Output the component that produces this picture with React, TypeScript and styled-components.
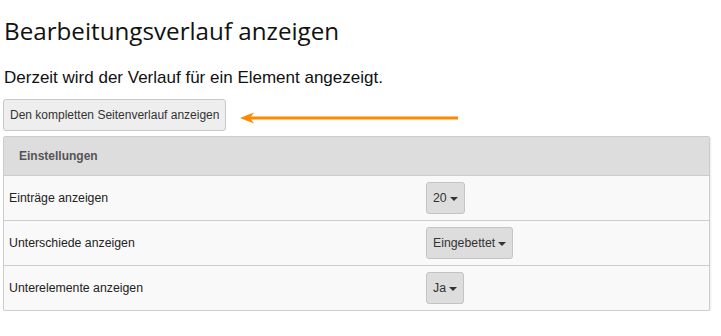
import React from "react";
import styled, { createGlobalStyle } from "styled-components";

const Global = createGlobalStyle`
  html, body { margin: 0; padding: 0; background: #fff; }
  body { font-family: "Liberation Sans", Arial, sans-serif; color: #222; }
`;

const Page = styled.div`
  padding: 0 11px 0 3px;
  display: flex;
  flex-direction: column;
`;

const Title = styled.h1`
  margin: 14px 0 0 1px;
  font-family: "Open Sans", "Noto Sans", sans-serif;
  font-weight: 400;
  font-size: 24.2px;
  line-height: 34px;
  color: #111;
`;

const Lead = styled.p`
  margin: 20px 0 0 1px;
  font-size: 17px;
  line-height: 20px;
  color: #111;
`;

const ActionRow = styled.div`
  display: flex;
  align-items: center;
  margin-top: 11px;
  gap: 14px;
`;

const Button = styled.button`
  font-family: "Liberation Sans", Arial, sans-serif;
  font-size: 12px;
  color: #333;
  background: #eee;
  border: 1px solid #c8c8c8;
  border-radius: 3px;
  height: 32px;
  padding: 0 6px;
  cursor: pointer;
`;

const Arrow = styled.svg`
  display: block;
  margin-top: 5px;
`;

const Panel = styled.div`
  margin-top: 5px;
  border: 1px solid #ccc;
  border-radius: 2px;
  box-shadow: 1px 1px 2px rgba(0, 0, 0, 0.08);
  background: #f9f9f9;
`;

const PanelHeader = styled.div`
  background: #ddd;
  height: 38px;
  display: flex;
  align-items: center;
  padding-left: 15px;
  font-weight: 700;
  font-size: 12px;
  color: #555;
  border-bottom: 1px solid #ccc;
`;

const Row = styled.div<{ $last?: boolean }>`
  display: grid;
  grid-template-columns: 416px 1fr;
  align-items: center;
  height: 44px;
  border-bottom: ${(p) => (p.$last ? "none" : "1px solid #ccc")};
`;

const Label = styled.div`
  padding-left: 5px;
  font-size: 12.3px;
  color: #222;
`;

const Cell = styled.div`
  padding-left: 6px;
  display: flex;
`;

const Dropdown = styled.button`
  font-family: "Liberation Sans", Arial, sans-serif;
  font-size: 12.3px;
  color: #333;
  background: #ddd;
  border: 1px solid #c4c4c4;
  border-radius: 3px;
  height: 32px;
  padding: 0 6px;
  display: flex;
  align-items: center;
  gap: 3px;
`;

const Caret = styled.span`
  display: inline-block;
  width: 0;
  height: 0;
  border-left: 4px solid transparent;
  border-right: 4px solid transparent;
  border-top: 4px solid #333;
  margin-top: 1px;
`;

const rows = [
  { label: "Einträge anzeigen", value: "20" },
  { label: "Unterschiede anzeigen", value: "Eingebettet" },
  { label: "Unterelemente anzeigen", value: "Ja" },
];

export default function App() {
  return (
    <>
      <Global />
      <Page>
        <Title>Bearbeitungsverlauf anzeigen</Title>
        <Lead>Derzeit wird der Verlauf für ein Element angezeigt.</Lead>
        <ActionRow>
          <Button>Den kompletten Seitenverlauf anzeigen</Button>
          <Arrow width="220" height="12" viewBox="0 0 220 12">
            <line x1="10" y1="6" x2="218" y2="6" stroke="#ff8800" strokeWidth="3" />
            <path d="M0 6 L14 0.5 L10 6 L14 11.5 Z" fill="#ff8800" />
          </Arrow>
        </ActionRow>
        <Panel>
          <PanelHeader>Einstellungen</PanelHeader>
          {rows.map((r, i) => (
            <Row key={r.label} $last={i === rows.length - 1}>
              <Label>{r.label}</Label>
              <Cell>
                <Dropdown>
                  {r.value}
                  <Caret />
                </Dropdown>
              </Cell>
            </Row>
          ))}
        </Panel>
      </Page>
    </>
  );
}
